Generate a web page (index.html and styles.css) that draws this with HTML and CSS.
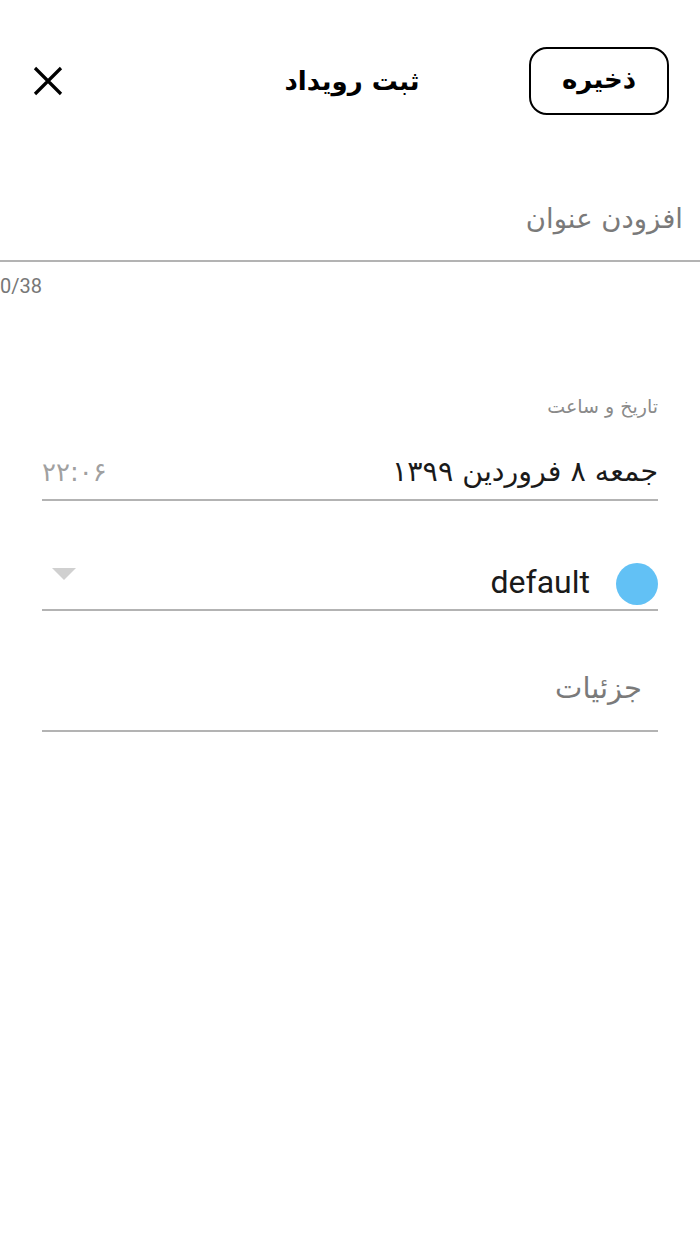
FILE: index.html
```html
<!DOCTYPE html>
<html lang="fa">
<head>
<meta charset="utf-8">
<title>ثبت رویداد</title>
<link rel="stylesheet" href="styles.css">
</head>
<body>
<div class="page">
  <header class="topbar">
    <button class="close" aria-label="بستن">
      <svg width="30" height="30" viewBox="0 0 30 30"><path d="M2 2 L28 28 M28 2 L2 28" stroke="#000" stroke-width="3.2" fill="none"/></svg>
    </button>
    <h1 class="title">ثبت رویداد</h1>
    <button class="save">ذخیره</button>
  </header>

  <div class="title-field">
    <span class="placeholder">افزودن عنوان</span>
  </div>
  <div class="counter">0/38</div>

  <section class="form">
    <div class="label">تاریخ و ساعت</div>
    <div class="row date-row">
      <span class="date">جمعه ۸ فروردین ۱۳۹۹</span>
      <span class="time">۲۲:۰۶</span>
    </div>
    <div class="row cat-row">
      <span class="dot"></span>
      <span class="cat">default</span>
      <span class="spacer"></span>
      <span class="caret"></span>
    </div>
    <div class="row details-row">
      <span class="details">جزئیات</span>
    </div>
  </section>
</div>
</body>
</html>
```

FILE: styles.css
```css
* { box-sizing: border-box; }
html, body { margin: 0; padding: 0; background: #fff; }
body {
  width: 700px;
  height: 1244px;
  font-family: "DejaVu Sans", "Noto Sans", Roboto, sans-serif;
  color: #1a1a1a;
}
.topbar {
  display: grid;
  grid-template-columns: 1fr auto 1fr;
  align-items: center;
  padding: 47px 31px 0 33px;
  height: 115px;
  direction: ltr;
}
.close {
  justify-self: start;
  width: 30px;
  height: 30px;
  padding: 0;
  border: none;
  background: none;
  display: flex;
}
.title {
  margin: 0;
  font-size: 26px;
  font-weight: bold;
  color: #000;
  position: relative;
  left: 1px;
}
.save {
  justify-self: end;
  width: 140px;
  height: 68px;
  border: 2px solid #000;
  border-radius: 18px;
  background: #fff;
  font-family: inherit;
  font-size: 26px;
  font-weight: bold;
  color: #000;
  padding: 0 0 4px;
}
.title-field {
  margin-top: 45px;
  height: 102px;
  padding: 38px 17px 0 0;
  border-bottom: 2px solid #b3b3b3;
  direction: rtl;
}
.placeholder {
  display: block;
  font-size: 27.5px;
  line-height: 40px;
  color: #7a7a7a;
}
.counter {
  margin-top: 14px;
  font-family: Roboto, sans-serif;
  font-size: 20px;
  line-height: 20px;
  color: #777;
}
.form {
  margin: 98px 42px 0;
  direction: rtl;
}
.label {
  font-size: 19px;
  line-height: 24px;
  color: #8a8a8a;
}
.row {
  display: flex;
  align-items: center;
  border-bottom: 2px solid #b3b3b3;
}
.date-row {
  justify-content: space-between;
  padding: 34px 0 7px;
}
.date {
  font-size: 28.5px;
  line-height: 40px;
  color: #1a1a1a;
}
.time {
  font-size: 26px;
  line-height: 40px;
  color: #a0a0a0;
}
.cat-row {
  padding: 60px 0 2px;
  height: 110px;
}
.dot {
  width: 42px;
  height: 42px;
  border-radius: 50%;
  background: #62c1f5;
  margin-left: 26px;
  flex: none;
}
.cat {
  font-family: Roboto, sans-serif;
  font-size: 32px;
  line-height: 40px;
  color: #1a1a1a;
  margin-bottom: 4px;
}
.spacer { flex: 1; }
.caret {
  align-self: flex-start;
  margin-top: 7px;
  margin-left: 10px;
  width: 0;
  height: 0;
  border-left: 12px solid transparent;
  border-right: 12px solid transparent;
  border-top: 12px solid #d0d0d0;
}
.details-row {
  padding: 57px 16px 22px 0;
}
.details {
  font-size: 29px;
  line-height: 40px;
  color: #7a7a7a;
}
```
